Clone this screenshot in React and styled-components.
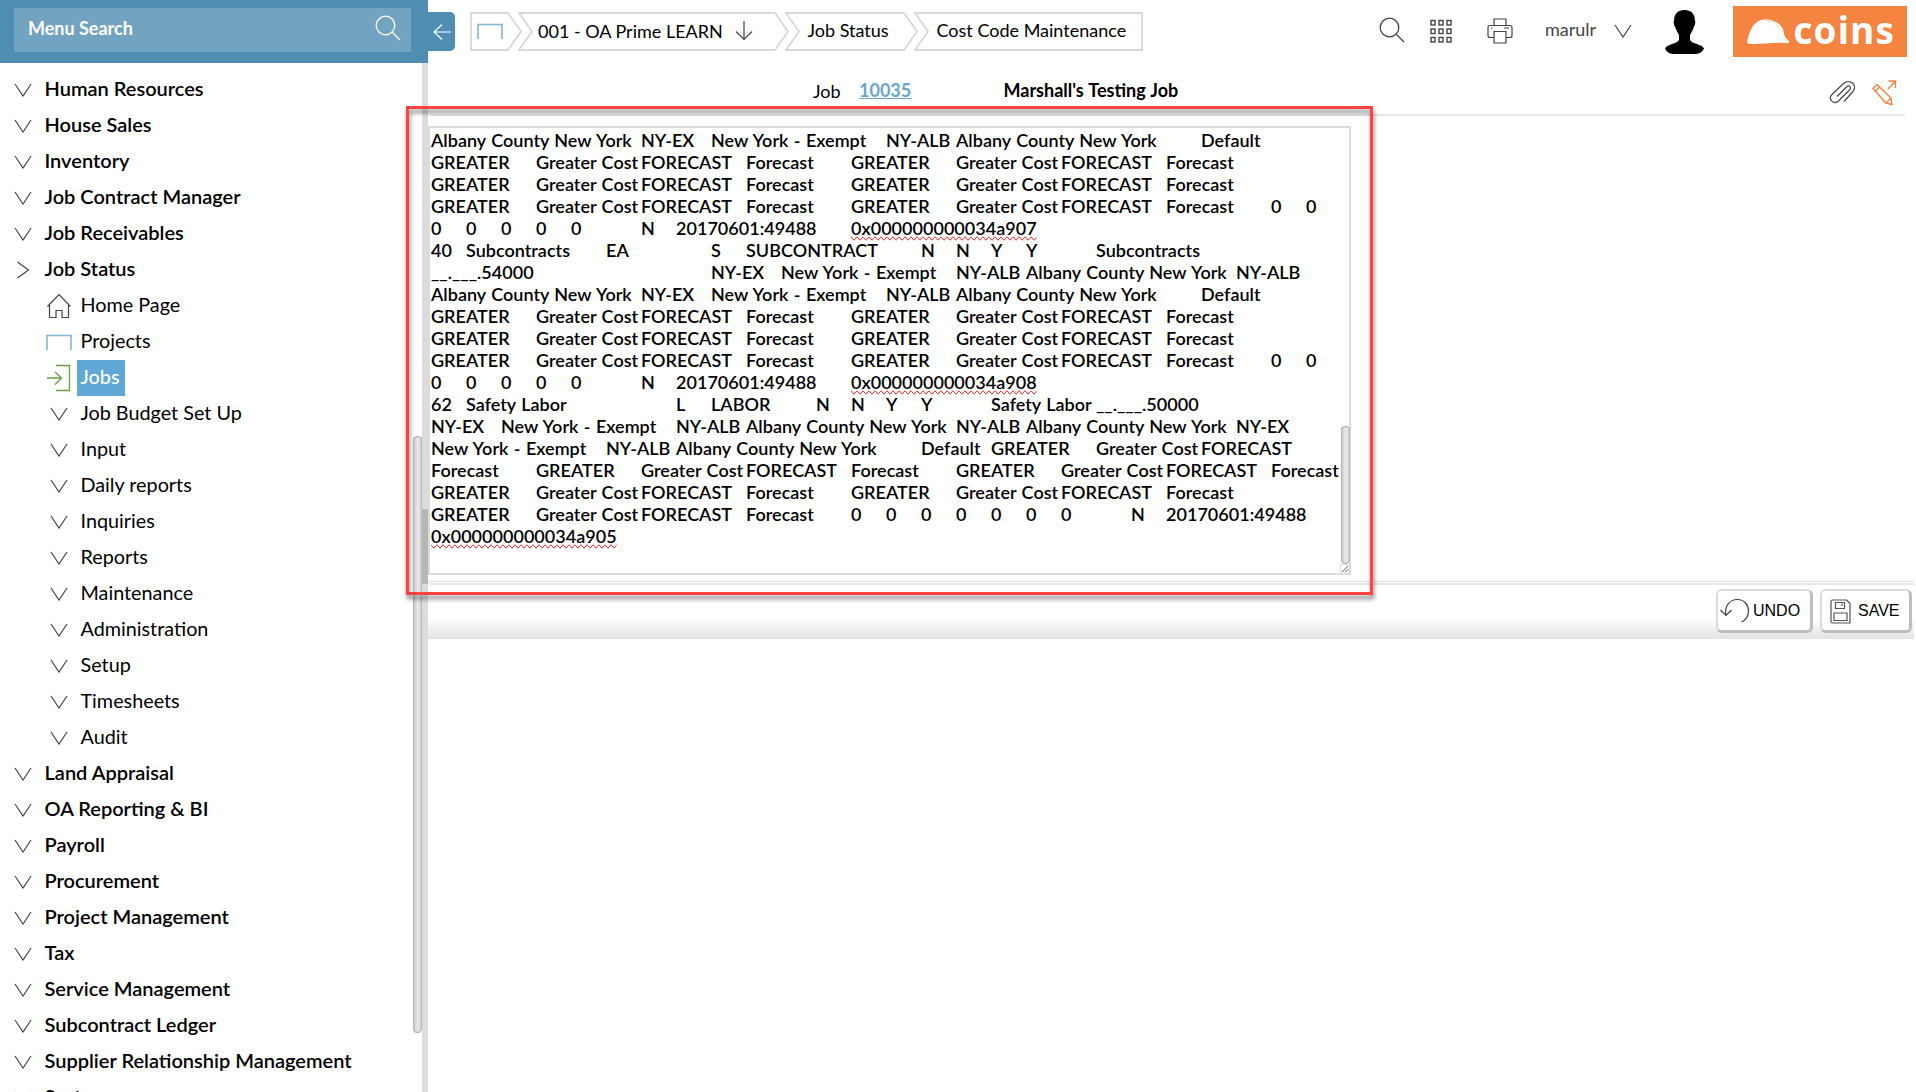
import React from "react";
import styled, { createGlobalStyle, css } from "styled-components";

const GlobalStyle = createGlobalStyle`
  * { box-sizing: border-box; }
  html, body { margin: 0; height: 100%; overflow: hidden; background: #fff; }
  body { font-family: Lato, "Open Sans", sans-serif; font-size: 18px; color: #000; }
`;

const Shell = styled.div`
  position: relative;
  display: flex;
  width: 1916px;
  height: 1092px;
  overflow: hidden;
  background: #fff;
`;

const Sidebar = styled.aside`
  display: flex;
  flex-direction: column;
  width: 428px;
  flex: none;
`;

const SearchPanel = styled.div`
  height: 63px;
  flex: none;
  padding: 8px 17px 11px 14px;
  background: #4f8db3;
`;

const SearchBox = styled.div`
  display: flex;
  align-items: center;
  justify-content: space-between;
  height: 44px;
  padding: 0 10.5px 3.5px 14px;
  background: #72a3c1;
  color: #fff;
  font-weight: 700;
`;

const MenuArea = styled.div`
  display: flex;
  flex: 1;
  min-height: 0;
`;

const MenuList = styled.ul`
  flex: 1;
  margin: 0;
  padding: 9px 0 0;
  list-style: none;
  overflow: hidden;
`;

const MenuRow = styled.li`
  display: flex;
  align-items: center;
  height: 36px;
  font-size: ${(p) => (p.$child ? 19.8 : 20)}px;
  white-space: nowrap;
  font-weight: ${(p) => (p.$child ? 400 : 600)};
  padding-left: ${(p) => (p.$child ? 45 : 9)}px;
`;

const MenuIcon = styled.span`
  display: flex;
  justify-content: center;
  width: 28px;
  flex: none;
`;

const MenuLabel = styled.span`
  height: 36px;
  line-height: 32px;
  margin-left: 4px;
  padding: 0 5px 0 3.5px;
  ${(p) =>
    p.$active &&
    css`
      background: #5fa8d6;
      color: #fff;
      font-weight: 500;
    `}
`;

const MenuScroll = styled.div`
  width: 9px;
  padding-top: 373px;
`;

const Pill = styled.div`
  width: 9px;
  height: ${(p) => p.$height}px;
  border-radius: 5px;
  background: linear-gradient(90deg, #b4b4b4, #dadada 28%, #e9e9e9 55%, #dadada 80%, #b8b8b8);
  box-shadow: inset 0 1px 1px #a8a8a8, inset 0 -1px 1px #a8a8a8;
`;

const FrameTrack = styled.div`
  width: 6px;
  padding-top: 446px;
  background: #dcdcdc;
`;

const FrameThumb = styled.div`
  height: 75px;
  background: #b6b6b6;
`;

const Main = styled.main`
  flex: 1;
  min-width: 0;
  display: flex;
  flex-direction: column;
`;

const TopBar = styled.header`
  display: flex;
  align-items: flex-start;
  height: 63px;
  flex: none;
`;

const Collapse = styled.div`
  display: flex;
  align-items: center;
  justify-content: center;
  width: 27px;
  height: 39px;
  margin-top: 12px;
  border-radius: 0 5px 5px 0;
  background: #4f8db3;
`;

const Crumbs = styled.nav`
  display: flex;
  margin: 12px 0 0 15px;
`;

const Crumb = styled.div`
  position: relative;
  display: flex;
  align-items: center;
  width: ${(p) => p.$width}px;
  height: 39px;
  padding-left: ${(p) => p.$pad}px;
  padding-bottom: ${(p) => p.$lift}px;
  margin-right: -4px;
  white-space: nowrap;
`;

const CrumbOutline = styled.svg`
  position: absolute;
  left: 0;
  top: 0;
`;

const CrumbArrow = styled.span`
  display: flex;
  margin-left: 12px;
`;

const Tools = styled.div`
  display: flex;
  margin-left: auto;
  padding-right: 9px;
`;

const Tool = styled.div`
  margin: ${(p) => p.$top}px ${(p) => p.$gap}px 0 0;
  height: max-content;
  display: flex;
`;

const UserName = styled.span`
  width: 52px;
  margin: 17px 17px 0 0;
  line-height: 24px;
  color: #444;
`;

const Logo = styled.div`
  display: flex;
  align-items: center;
  width: 174px;
  height: 51px;
  margin-top: 6px;
  padding-left: 13px;
  background: #f4843f;
  color: #fff;
`;

const LogoText = styled.span`
  margin: -4px 0 0 3.5px;
  font: 700 37px/51px "Open Sans", sans-serif;
  letter-spacing: 1.1px;
`;

const JobBar = styled.div`
  display: flex;
  align-items: center;
  height: 53px;
  margin: 0 11px 0 2px;
  padding: 0 8px 0 383px;
  border-bottom: 2px solid #e8e8e8;
`;

const JobLabel = styled.span`
  width: 46px;
  margin-top: 4px;
`;

const JobLink = styled.a`
  width: 144.5px;
  margin-top: 3px;
  font-weight: 700;
  color: #6ba5cc;
  text-decoration: underline;
`;

const JobTitle = styled.span`
  flex: 1;
  margin-top: 3px;
  font-weight: 700;
  word-spacing: 0.7px;
`;

const JobTools = styled.div`
  display: flex;
  gap: 16px;
  margin-top: 8px;
`;

const EditorWrap = styled.div`
  height: 465px;
  padding-top: 10px;
`;

const Editor = styled.div`
  display: flex;
  width: 923px;
  height: 449px;
  border: 2px solid #dcdcdc;
`;

const Lines = styled.div`
  flex: 1;
  min-width: 0;
  padding: 1px 0 0 1px;
  font-weight: 600;
  letter-spacing: 0.02px;
  word-spacing: 0.85px;
`;

const Line = styled.div`
  display: grid;
  grid-template-columns: repeat(25, 35px);
  height: 22px;
  line-height: 22px;
`;

const Cell = styled.span`
  grid-row: 1;
  grid-column-start: ${(p) => p.$col + 1};
  width: max-content;
  white-space: pre;
  ${(p) => p.$misspelt && css`text-decoration-line: spelling-error;`}
`;

const EditorScroll = styled.div`
  display: flex;
  flex-direction: column;
  justify-content: flex-end;
  width: 9px;
  margin-right: -1px;
`;

const Grip = styled.svg`
  margin-left: -1px;
  flex: none;
`;

const ActionBar = styled.footer`
  height: 58px;
  margin-right: 2px;
  padding-top: 1px;
  border-top: 1px solid #dedede;
  background: linear-gradient(#fff 62%, #e3e3e3);
`;

const ActionInner = styled.div`
  display: flex;
  justify-content: flex-end;
  gap: 7px;
  margin-left: 2px;
  padding: 4px 2px 0 0;
  border-top: 2px solid #e6e6e6;
`;

const ActionButton = styled.button`
  display: flex;
  align-items: center;
  gap: ${(p) => p.$gap}px;
  width: ${(p) => p.$width}px;
  height: 44px;
  padding: 1px 0 0 ${(p) => p.$pad}px;
  border: solid #dcdcdc;
  border-width: 2px 3px 3px 2px;
  border-right-color: #bebebe;
  border-bottom-color: #bebebe;
  border-radius: 6px;
  background: #fff;
  font: 16px "Liberation Sans", Arial, sans-serif;
  color: #000;
`;

const Highlight = styled.div`
  position: absolute;
  left: 406px;
  top: 106px;
  width: 967px;
  height: 489px;
  border: 3px solid #ff4343;
  filter: drop-shadow(1px 4px 2px rgba(0, 0, 0, 0.5));
  pointer-events: none;
`;

const Stroke = ({ w, h, color = "#444", sw = 1.2, children }) => (
  <svg width={w} height={h} viewBox={`0 0 ${w} ${h}`} fill="none" stroke={color} strokeWidth={sw}>
    {children}
  </svg>
);

const Chevron = ({ right }) =>
  right ? (
    <Stroke w={14} h={18}><path d="M1.500 1 L12.500 9 L1.500 17" /></Stroke>
  ) : (
    <Stroke w={18} h={14}><path d="M1 1 L9 13 L17 1" /></Stroke>
  );

const Magnifier = ({ color }) => (
  <Stroke w={26} h={26} color={color} sw={1.3}>
    <circle cx="10.500" cy="10.500" r="9.300" />
    <path d="M17 17 L25 25" />
  </Stroke>
);

const HomeIcon = () => (
  <Stroke w={26} h={26}>
    <path d="M1.500 13.500 L13 1.500 L24.500 13.500 M3.500 12 V24.500 H10 V17.500 H16 V24.500 H22.500 V12" />
  </Stroke>
);

const ProjectIcon = () => (
  <Stroke w={26} h={16} color="#85b5d8" sw={1.6}>
    <path d="M1 16 V1.500 H25 V16" />
  </Stroke>
);

const EnterIcon = () => (
  <Stroke w={24} h={28} color="#6c9c45" sw={1.3}>
    <path d="M9 1.500 H22.500 V26.500 H9 M0 14 H14 M8 8 L14.500 14 L8 20.500" />
  </Stroke>
);

const icons = { home: HomeIcon, project: ProjectIcon, enter: EnterIcon };

const menu = [
  ["Human Resources"], ["House Sales"], ["Inventory"], ["Job Contract Manager"], ["Job Receivables"],
  ["Job Status", { open: true }],
  ["Home Page", { child: true, icon: "home" }],
  ["Projects", { child: true, icon: "project" }],
  ["Jobs", { child: true, icon: "enter", active: true }],
  ...["Job Budget Set Up", "Input", "Daily reports", "Inquiries", "Reports", "Maintenance",
    "Administration", "Setup", "Timesheets", "Audit"].map((t) => [t, { child: true }]),
  ["Land Appraisal"], ["OA Reporting & BI"], ["Payroll"], ["Procurement"], ["Project Management"], ["Tax"],
  ["Service Management"], ["Subcontract Ledger"], ["Supplier Relationship Management"], ["System"],
];

const ALB = "Albany County New York";
const EXEMPT = "New York - Exempt";
const greater = (c) => [[c, "GREATER"], [c + 3, "Greater Cost"], [c + 6, "FORECAST"], [c + 9, "Forecast"]];
const countyLine = [[0, ALB], [6, "NY-EX"], [8, EXEMPT], [13, "NY-ALB"], [15, ALB], [22, "Default"]];
const pair = [...greater(0), ...greater(12)];
const pairZeros = [...pair, [24, "0"], [25, "0"]];
const zeros = (from, n) => Array.from({ length: n }, (_, i) => [from + i, "0"]);
const stamp = (id) => [...zeros(0, 5), [6, "N"], [7, "20170601:49488"], [12, id]];

const lines = [
  countyLine, pair, pair, pairZeros,
  stamp("0x000000000034a907"),
  [[0, "40"], [1, "Subcontracts"], [5, "EA"], [8, "S"], [9, "SUBCONTRACT"], [14, "N"], [15, "N"], [16, "Y"], [17, "Y"], [19, "Subcontracts"]],
  [[0, "__.___.54000"], [8, "NY-EX"], [10, EXEMPT], [15, "NY-ALB"], [17, ALB], [23, "NY-ALB"]],
  countyLine, pair, pair, pairZeros,
  stamp("0x000000000034a908"),
  [[0, "62"], [1, "Safety Labor"], [7, "L"], [8, "LABOR"], [11, "N"], [12, "N"], [13, "Y"], [14, "Y"], [16, "Safety Labor"], [19, "__.___.50000"]],
  [[0, "NY-EX"], [2, EXEMPT], [7, "NY-ALB"], [9, ALB], [15, "NY-ALB"], [17, ALB], [23, "NY-EX"]],
  [[0, EXEMPT], [5, "NY-ALB"], [7, ALB], [14, "Default"], [16, "GREATER"], [19, "Greater Cost"], [22, "FORECAST"]],
  [[0, "Forecast"], ...greater(3), ...greater(15)],
  pair,
  [...greater(0), ...zeros(12, 7), [20, "N"], [21, "20170601:49488"]],
  [[0, "0x000000000034a905"]],
];

const CrumbItem = ({ width, pad, lift = 3, first, last, children }) => {
  const r = last ? width - 1 : width - 14;
  const d = `M1 1 H${r} ${last ? "V38" : `L${width - 1} 19.500 L${r} 38`} H1 ${first ? "Z" : "L14 19.500 Z"}`;
  return (
    <Crumb $width={width} $pad={pad} $lift={lift}>
      <CrumbOutline width={width} height={39} fill="none" stroke="#d9d9d9" strokeWidth="1.800">
        <path d={d} />
      </CrumbOutline>
      {children}
    </Crumb>
  );
};

export default function App() {
  return (
    <Shell>
      <GlobalStyle />
      <Sidebar>
        <SearchPanel>
          <SearchBox>Menu Search<Magnifier color="#fff" /></SearchBox>
        </SearchPanel>
        <MenuArea>
          <MenuList>
            {menu.map(([label, o = {}]) => {
              const Icon = icons[o.icon];
              return (
                <MenuRow key={label} $child={o.child}>
                  <MenuIcon>{Icon ? <Icon /> : <Chevron right={o.open} />}</MenuIcon>
                  <MenuLabel $active={o.active}>{label}</MenuLabel>
                </MenuRow>
              );
            })}
          </MenuList>
          <MenuScroll><Pill $height={597} /></MenuScroll>
          <FrameTrack><FrameThumb /></FrameTrack>
        </MenuArea>
      </Sidebar>
      <Main>
        <TopBar>
          <Collapse>
            <Stroke w={20} h={18} color="#fff"><path d="M19 9 H2 M10 1.500 L2 9 L10 16.500" /></Stroke>
          </Collapse>
          <Crumbs>
            <CrumbItem width={52} pad={7} lift={1} first><ProjectIcon /></CrumbItem>
            <CrumbItem width={271} pad={20} lift={2}>
              001 - OA Prime LEARN
              <CrumbArrow>
                <Stroke w={18} h={20}><path d="M9 0 V18.500 M1 10.500 L9 18.500 L17 10.500" /></Stroke>
              </CrumbArrow>
            </CrumbItem>
            <CrumbItem width={133} pad={22.5}>Job Status</CrumbItem>
            <CrumbItem width={229} pad={22.5} last>Cost Code Maintenance</CrumbItem>
          </Crumbs>
          <Tools>
            <Tool $top={17} $gap={25}><Magnifier /></Tool>
            <Tool $top={19} $gap={35}>
              <Stroke w={22} h={24} sw={1.4}>
                {[1, 9, 17].map((x) => [1.5, 10, 18.5].map((y) => (
                  <rect key={`${x}-${y}`} x={x} y={y} width="4" height="4.500" />
                )))}
              </Stroke>
            </Tool>
            <Tool $top={18} $gap={32}>
              <Stroke w={26} h={26}>
                <path d="M7 7.500 V1 H19 V7.500 M7 19.500 H3 Q1 19.500 1 17.500 V9.500 Q1 7.500 3 7.500 H23 Q25 7.500 25 9.500 V17.500 Q25 19.500 23 19.500 H19 M7 13.500 H19 V25 H7 Z M17 10 H22 M4 10 H5.500" />
              </Stroke>
            </Tool>
            <UserName>marulr</UserName>
            <Tool $top={24} $gap={33}><Chevron /></Tool>
            <Tool $top={10} $gap={29}>
              <svg width="39" height="44" viewBox="0 0 39 44">
                <path d="M19.500 0 C26 0 30 4 29.800 10 C30.800 11 30.300 15 28.800 17 C27.500 21 26 23 25 25 V30 C27 34 37 34 39 38.500 C37 43 33 44 30 44 H9 C6 44 2 43 0 38.500 C2 34 12 34 14 30 V25 C13 23 11.500 21 10.200 17 C8.700 15 8.200 11 9.200 10 C9 4 13 0 19.500 0 Z" />
              </svg>
            </Tool>
            <Logo>
              <svg width="44" height="26" viewBox="0 0 44 26" fill="#fff">
                <path d="M2 19 C4 10 9 1 18 .500 C28 0 36 5 37.500 12 C38 16 39 19 43 22 C43.500 24 42 24.500 39 24 C28 23 14 25.500 4 25 C0 25 1 21 2 19 Z" />
                <path d="M18 2 C24 1 30 4 33 9" fill="none" stroke="#f9b78d" strokeWidth=".600" />
              </svg>
              <LogoText>coins</LogoText>
            </Logo>
          </Tools>
        </TopBar>
        <JobBar>
          <JobLabel>Job</JobLabel>
          <JobLink>10035</JobLink>
          <JobTitle>Marshall's Testing Job</JobTitle>
          <JobTools>
            <Stroke w={27} h={26}>
              <path d="M8 16.500 L17.500 7 C20 4.500 23 7.500 20.500 10 L9.500 21 C5 25 -1.500 19.500 3 14.500 L14.500 3.500 C20.500 -2 29 5 24 11.500 L15 21.500" />
            </Stroke>
            <Stroke w={25} h={26} color="#f4843f" sw={1.4}>
              <path d="M1 8.500 L5 4.500 L19 18 L20 24.500 L14 23 Z M3.500 11 L7.500 7 M14 23 L19 18 M16 9 L23.500 1 M16.500 1 H23.500 V8" />
            </Stroke>
          </JobTools>
        </JobBar>
        <EditorWrap>
          <Editor>
            <Lines>
              {lines.map((cells, i) => (
                <Line key={i}>
                  {cells.map(([col, text]) => (
                    <Cell key={col} $col={col} $misspelt={text.startsWith("0x")}>{text}</Cell>
                  ))}
                </Line>
              ))}
            </Lines>
            <EditorScroll>
              <Pill $height={138} />
              <Grip width="10" height="9" fill="none" stroke="#666">
                <path d="M.500 9 V.500 H10" stroke="#dcdcdc" />
                <path d="M2 8 L8 2 M5.500 8 L8.500 5" />
              </Grip>
            </EditorScroll>
          </Editor>
        </EditorWrap>
        <ActionBar>
          <ActionInner>
            <ActionButton $width={97} $pad={2} $gap={3}>
              <Stroke w={30} h={26}>
                <path d="M6 17.500 C4 8 10 1.500 17.500 1.500 C24 1.500 28.500 7 28.500 13 C28.500 18.500 26 22 21.500 24 M0.500 12 L6 17.500 L11.500 12" />
              </Stroke>
              UNDO
            </ActionButton>
            <ActionButton $width={92} $pad={8} $gap={7}>
              <Stroke w={21} h={25} color="#555">
                <path d="M1 2.500 Q1 1 2.500 1 H16.500 L20 4.500 V24 H2.500 Q1 24 1 22.500 Z M5.500 3.500 H14.500 V9.500 H5.500 Z M12 4.500 V7 M4 14 H17 V21.500 H4 Z" />
              </Stroke>
              SAVE
            </ActionButton>
          </ActionInner>
        </ActionBar>
      </Main>
      <Highlight />
    </Shell>
  );
}
